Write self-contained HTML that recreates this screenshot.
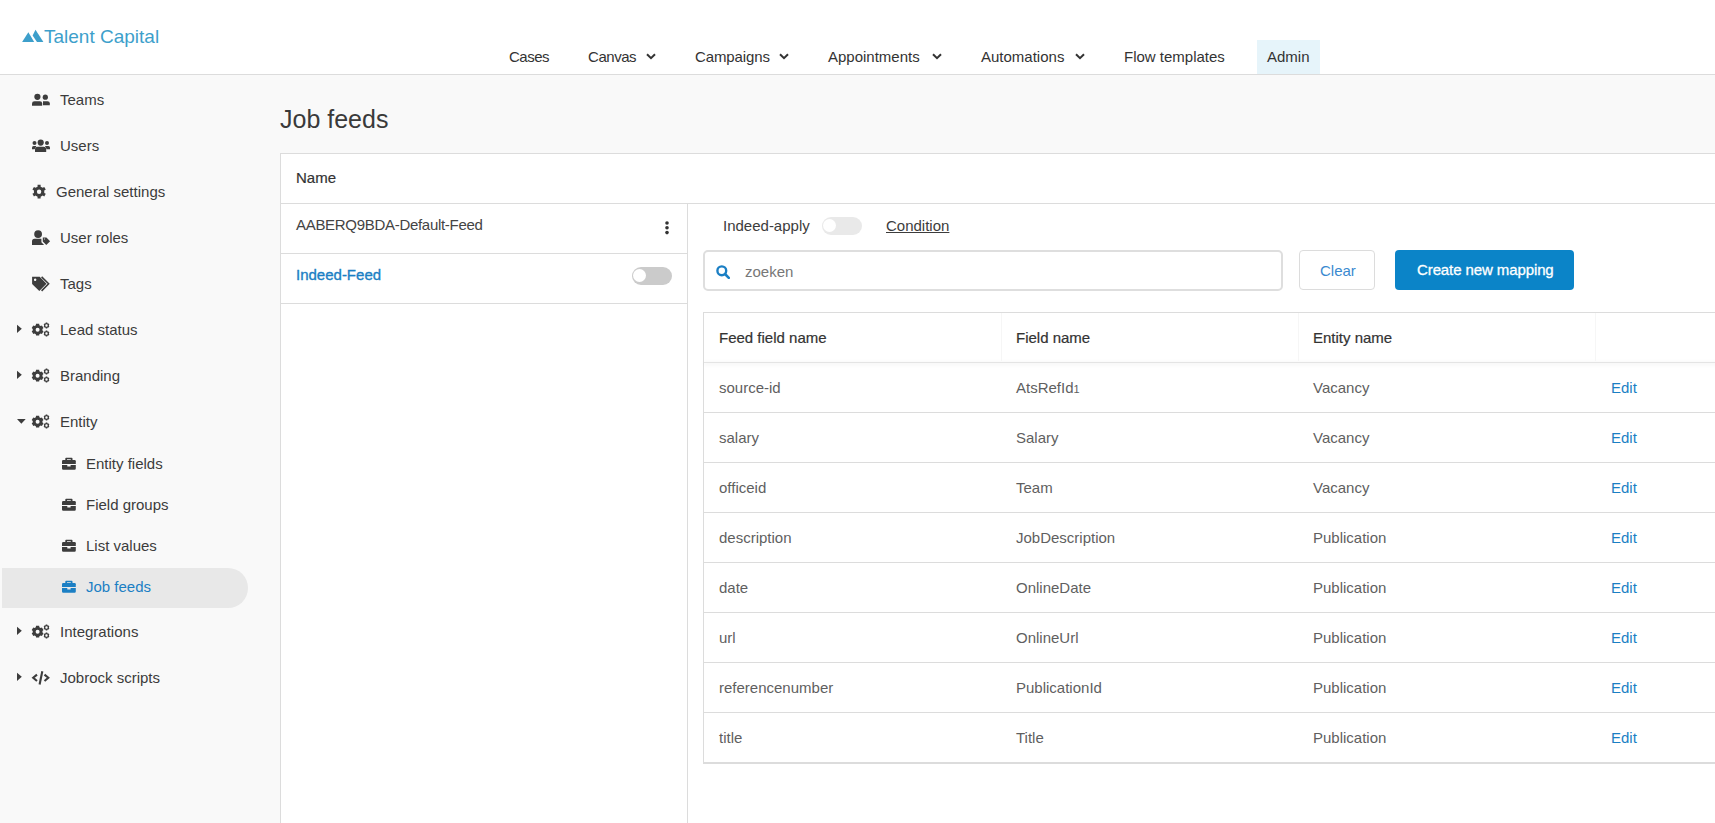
<!DOCTYPE html>
<html><head><meta charset="utf-8">
<style>
*{box-sizing:border-box;margin:0;padding:0}
html,body{width:1715px;height:823px;overflow:hidden}
body{background:#f9f9f9;font-family:"Liberation Sans",sans-serif;color:#3c3c3c;position:relative}
.abs{position:absolute;white-space:nowrap}
#hdr{position:absolute;left:0;top:0;width:1715px;height:75px;background:#fff;border-bottom:1px solid #dcdcdc}
.nav{position:absolute;top:48px;font-size:15px;line-height:18px;color:#333;white-space:nowrap}
.chev{position:absolute;top:53px;width:10px;height:7px}
#admin{position:absolute;left:1257px;top:40px;width:63px;height:34px;background:#e6f4fa}
.side{position:absolute;font-size:15px;line-height:18px;color:#3c3c3c;white-space:nowrap}
.ico{position:absolute}
#card{position:absolute;left:280px;top:153px;width:1500px;height:700px;background:#fff;border:1px solid #dcdcdc}
.t15{font-size:15px;line-height:18px}
</style></head><body>
<div id="hdr">
  <svg class="ico" style="left:22px;top:29px" width="22" height="13" viewBox="0 0 22 13"><path d="M0.1 12.9 L6.35 3.2 L12.2 12.9 Z" fill="#3d9fcb"/><path d="M15 12.9 L10.6 6.4 L13.5 0.8 L21.4 12.9 Z" fill="#3d9fcb"/></svg>
  <div class="abs" style="left:44px;top:26px;font-size:19px;line-height:22px;color:#3d9fcb">Talent Capital</div>
  <div id="admin"></div>
  <div class="nav" style="left:509px;letter-spacing:-0.5px">Cases</div>
  <div class="nav" style="left:588px;letter-spacing:-0.45px">Canvas</div>
  <svg class="chev" style="left:646px" viewBox="0 0 10 7"><path d="M1 1.2 L5 5.2 L9 1.2" stroke="#333" stroke-width="2" fill="none"/></svg>
  <div class="nav" style="left:695px;letter-spacing:-0.1px">Campaigns</div>
  <svg class="chev" style="left:779px" viewBox="0 0 10 7"><path d="M1 1.2 L5 5.2 L9 1.2" stroke="#333" stroke-width="2" fill="none"/></svg>
  <div class="nav" style="left:828px">Appointments</div>
  <svg class="chev" style="left:932px" viewBox="0 0 10 7"><path d="M1 1.2 L5 5.2 L9 1.2" stroke="#333" stroke-width="2" fill="none"/></svg>
  <div class="nav" style="left:981px">Automations</div>
  <svg class="chev" style="left:1075px" viewBox="0 0 10 7"><path d="M1 1.2 L5 5.2 L9 1.2" stroke="#333" stroke-width="2" fill="none"/></svg>
  <div class="nav" style="left:1124px">Flow templates</div>
  <div class="nav" style="left:1267px">Admin</div>
</div>

<!-- sidebar -->
<div id="sidebar">
  <div class="abs" style="left:2px;top:568px;width:246px;height:40px;background:#e8e8e8;border-radius:0 20px 20px 0"></div>
  <div class="side" style="left:60px;top:91px">Teams</div>
  <div class="side" style="left:60px;top:137px">Users</div>
  <div class="side" style="left:56px;top:183px">General settings</div>
  <div class="side" style="left:60px;top:229px">User roles</div>
  <div class="side" style="left:60px;top:275px">Tags</div>
  <div class="side" style="left:60px;top:321px">Lead status</div>
  <div class="side" style="left:60px;top:367px">Branding</div>
  <div class="side" style="left:60px;top:413px">Entity</div>
  <div class="side" style="left:86px;top:455px">Entity fields</div>
  <div class="side" style="left:86px;top:496px">Field groups</div>
  <div class="side" style="left:86px;top:537px">List values</div>
  <div class="side" style="left:86px;top:578px;color:#1b7fc4">Job feeds</div>
  <div class="side" style="left:60px;top:623px">Integrations</div>
  <div class="side" style="left:60px;top:669px">Jobrock scripts</div>
<!--SIDEICONS--><svg class="ico" style="left:0;top:0" width="280" height="823" viewBox="0 0 280 823"><circle cx="37.4" cy="96.8" r="3.1" fill="#3d3d3d"/><path d="M32 105.8 L32 103.5 Q32 101.2 34.5 101.2 L39.8 101.2 Q42.2 101.2 42.2 103.5 L42.2 105.8 Z" fill="#3d3d3d"/><circle cx="45.3" cy="97.2" r="2.6" fill="#3d3d3d"/><path d="M43 105.2 L43 101.2 L47.5 101.2 Q49.8 101.2 49.8 103.3 L49.8 105.2 Z" fill="#3d3d3d"/><circle cx="40.7" cy="142.6" r="3.1" fill="#3d3d3d"/><path d="M35 152 L35 149.3 Q35 146.8 37.6 146.8 L43.6 146.8 Q46.2 146.8 46.2 149.3 L46.2 152 Z" fill="#3d3d3d"/><circle cx="34.5" cy="143.1" r="2.0" fill="#3d3d3d"/><path d="M32 149.2 L32 147.6 Q32 146 33.6 146 L36.4 146 L34.6 149.2 Z" fill="#3d3d3d"/><circle cx="47" cy="143.1" r="2.0" fill="#3d3d3d"/><path d="M50 149.2 L50 147.6 Q50 146 48.4 146 L45 146 L46.6 149.2 Z" fill="#3d3d3d"/><path fill-rule="evenodd" d="M37.57 186.63 L37.57 184.87 L40.63 184.87 L40.63 186.63 L42.73 187.84 L44.25 186.96 L45.78 189.61 L44.26 190.49 L44.26 192.91 L45.78 193.79 L44.25 196.44 L42.73 195.56 L40.63 196.77 L40.63 198.53 L37.57 198.53 L37.57 196.77 L35.47 195.56 L33.95 196.44 L32.42 193.79 L33.94 192.91 L33.94 190.49 L32.42 189.61 L33.95 186.96 L35.47 187.84Z M41.30 191.70 A2.2 2.2 0 1 0 36.90 191.70 A2.2 2.2 0 1 0 41.30 191.70Z" fill="#3d3d3d"/><circle cx="38.1" cy="234.1" r="3.9" fill="#3d3d3d"/><path d="M32 245 L32 241.2 Q32 238.7 34.5 238.7 L41.4 238.7 L41.4 242.2 L44.1 245 Z" fill="#3d3d3d"/><path fill-rule="evenodd" d="M42.8 237.6 L46.4 237.6 L50.1 241.3 L46.3 245 L42.8 241.6 Z M44.2 238.6 L45 238.6 L45 239.4 L44.2 239.4 Z" fill="#3d3d3d"/><path fill-rule="evenodd" d="M32.1 276.8 L39.7 276.8 L46.5 283.8 L39.3 291 L32.1 284 Z M35.1 278.6 A1.1 1.1 0 1 0 35.11 278.6 Z" fill="#3d3d3d"/><circle cx="35.2" cy="279.8" r="1.15" fill="#f9f9f9"/><path d="M41.6 276.9 L48.6 283.8 L41.6 290.9" stroke="#3d3d3d" stroke-width="1.6" fill="none"/><path fill-rule="evenodd" d="M35.84 325.13 L36.02 323.81 L39.18 323.81 L39.36 325.13 L40.68 325.89 L41.91 325.39 L43.49 328.12 L42.44 328.93 L42.44 330.47 L43.49 331.28 L41.91 334.01 L40.68 333.51 L39.36 334.27 L39.18 335.59 L36.02 335.59 L35.84 334.27 L34.52 333.51 L33.29 334.01 L31.71 331.28 L32.76 330.47 L32.76 328.93 L31.71 328.12 L33.29 325.39 L34.52 325.89Z M39.60 329.70 A2.0 2.0 0 1 0 35.60 329.70 A2.0 2.0 0 1 0 39.60 329.70Z" fill="#3d3d3d"/><path fill-rule="evenodd" d="M45.65 323.15 L45.72 322.60 L47.28 322.60 L47.35 323.15 L48.11 323.59 L48.62 323.38 L49.40 324.72 L48.96 325.06 L48.96 325.94 L49.40 326.28 L48.62 327.62 L48.11 327.41 L47.35 327.85 L47.28 328.40 L45.72 328.40 L45.65 327.85 L44.89 327.41 L44.38 327.62 L43.60 326.28 L44.04 325.94 L44.04 325.06 L43.60 324.72 L44.38 323.38 L44.89 323.59Z M47.70 325.50 A1.2 1.2 0 1 0 45.30 325.50 A1.2 1.2 0 1 0 47.70 325.50Z" fill="#3d3d3d"/><path fill-rule="evenodd" d="M45.65 331.15 L45.72 330.60 L47.28 330.60 L47.35 331.15 L48.11 331.59 L48.62 331.38 L49.40 332.72 L48.96 333.06 L48.96 333.94 L49.40 334.28 L48.62 335.62 L48.11 335.41 L47.35 335.85 L47.28 336.40 L45.72 336.40 L45.65 335.85 L44.89 335.41 L44.38 335.62 L43.60 334.28 L44.04 333.94 L44.04 333.06 L43.60 332.72 L44.38 331.38 L44.89 331.59Z M47.70 333.50 A1.2 1.2 0 1 0 45.30 333.50 A1.2 1.2 0 1 0 47.70 333.50Z" fill="#3d3d3d"/><path fill-rule="evenodd" d="M35.84 371.13 L36.02 369.81 L39.18 369.81 L39.36 371.13 L40.68 371.89 L41.91 371.39 L43.49 374.12 L42.44 374.93 L42.44 376.47 L43.49 377.28 L41.91 380.01 L40.68 379.51 L39.36 380.27 L39.18 381.59 L36.02 381.59 L35.84 380.27 L34.52 379.51 L33.29 380.01 L31.71 377.28 L32.76 376.47 L32.76 374.93 L31.71 374.12 L33.29 371.39 L34.52 371.89Z M39.60 375.70 A2.0 2.0 0 1 0 35.60 375.70 A2.0 2.0 0 1 0 39.60 375.70Z" fill="#3d3d3d"/><path fill-rule="evenodd" d="M45.65 369.15 L45.72 368.60 L47.28 368.60 L47.35 369.15 L48.11 369.59 L48.62 369.38 L49.40 370.72 L48.96 371.06 L48.96 371.94 L49.40 372.28 L48.62 373.62 L48.11 373.41 L47.35 373.85 L47.28 374.40 L45.72 374.40 L45.65 373.85 L44.89 373.41 L44.38 373.62 L43.60 372.28 L44.04 371.94 L44.04 371.06 L43.60 370.72 L44.38 369.38 L44.89 369.59Z M47.70 371.50 A1.2 1.2 0 1 0 45.30 371.50 A1.2 1.2 0 1 0 47.70 371.50Z" fill="#3d3d3d"/><path fill-rule="evenodd" d="M45.65 377.15 L45.72 376.60 L47.28 376.60 L47.35 377.15 L48.11 377.59 L48.62 377.38 L49.40 378.72 L48.96 379.06 L48.96 379.94 L49.40 380.28 L48.62 381.62 L48.11 381.41 L47.35 381.85 L47.28 382.40 L45.72 382.40 L45.65 381.85 L44.89 381.41 L44.38 381.62 L43.60 380.28 L44.04 379.94 L44.04 379.06 L43.60 378.72 L44.38 377.38 L44.89 377.59Z M47.70 379.50 A1.2 1.2 0 1 0 45.30 379.50 A1.2 1.2 0 1 0 47.70 379.50Z" fill="#3d3d3d"/><path fill-rule="evenodd" d="M35.84 417.13 L36.02 415.81 L39.18 415.81 L39.36 417.13 L40.68 417.89 L41.91 417.39 L43.49 420.12 L42.44 420.93 L42.44 422.47 L43.49 423.28 L41.91 426.01 L40.68 425.51 L39.36 426.27 L39.18 427.59 L36.02 427.59 L35.84 426.27 L34.52 425.51 L33.29 426.01 L31.71 423.28 L32.76 422.47 L32.76 420.93 L31.71 420.12 L33.29 417.39 L34.52 417.89Z M39.60 421.70 A2.0 2.0 0 1 0 35.60 421.70 A2.0 2.0 0 1 0 39.60 421.70Z" fill="#3d3d3d"/><path fill-rule="evenodd" d="M45.65 415.15 L45.72 414.60 L47.28 414.60 L47.35 415.15 L48.11 415.59 L48.62 415.38 L49.40 416.72 L48.96 417.06 L48.96 417.94 L49.40 418.28 L48.62 419.62 L48.11 419.41 L47.35 419.85 L47.28 420.40 L45.72 420.40 L45.65 419.85 L44.89 419.41 L44.38 419.62 L43.60 418.28 L44.04 417.94 L44.04 417.06 L43.60 416.72 L44.38 415.38 L44.89 415.59Z M47.70 417.50 A1.2 1.2 0 1 0 45.30 417.50 A1.2 1.2 0 1 0 47.70 417.50Z" fill="#3d3d3d"/><path fill-rule="evenodd" d="M45.65 423.15 L45.72 422.60 L47.28 422.60 L47.35 423.15 L48.11 423.59 L48.62 423.38 L49.40 424.72 L48.96 425.06 L48.96 425.94 L49.40 426.28 L48.62 427.62 L48.11 427.41 L47.35 427.85 L47.28 428.40 L45.72 428.40 L45.65 427.85 L44.89 427.41 L44.38 427.62 L43.60 426.28 L44.04 425.94 L44.04 425.06 L43.60 424.72 L44.38 423.38 L44.89 423.59Z M47.70 425.50 A1.2 1.2 0 1 0 45.30 425.50 A1.2 1.2 0 1 0 47.70 425.50Z" fill="#3d3d3d"/><path fill-rule="evenodd" d="M35.84 627.13 L36.02 625.81 L39.18 625.81 L39.36 627.13 L40.68 627.89 L41.91 627.39 L43.49 630.12 L42.44 630.93 L42.44 632.47 L43.49 633.28 L41.91 636.01 L40.68 635.51 L39.36 636.27 L39.18 637.59 L36.02 637.59 L35.84 636.27 L34.52 635.51 L33.29 636.01 L31.71 633.28 L32.76 632.47 L32.76 630.93 L31.71 630.12 L33.29 627.39 L34.52 627.89Z M39.60 631.70 A2.0 2.0 0 1 0 35.60 631.70 A2.0 2.0 0 1 0 39.60 631.70Z" fill="#3d3d3d"/><path fill-rule="evenodd" d="M45.65 625.15 L45.72 624.60 L47.28 624.60 L47.35 625.15 L48.11 625.59 L48.62 625.38 L49.40 626.72 L48.96 627.06 L48.96 627.94 L49.40 628.28 L48.62 629.62 L48.11 629.41 L47.35 629.85 L47.28 630.40 L45.72 630.40 L45.65 629.85 L44.89 629.41 L44.38 629.62 L43.60 628.28 L44.04 627.94 L44.04 627.06 L43.60 626.72 L44.38 625.38 L44.89 625.59Z M47.70 627.50 A1.2 1.2 0 1 0 45.30 627.50 A1.2 1.2 0 1 0 47.70 627.50Z" fill="#3d3d3d"/><path fill-rule="evenodd" d="M45.65 633.15 L45.72 632.60 L47.28 632.60 L47.35 633.15 L48.11 633.59 L48.62 633.38 L49.40 634.72 L48.96 635.06 L48.96 635.94 L49.40 636.28 L48.62 637.62 L48.11 637.41 L47.35 637.85 L47.28 638.40 L45.72 638.40 L45.65 637.85 L44.89 637.41 L44.38 637.62 L43.60 636.28 L44.04 635.94 L44.04 635.06 L43.60 634.72 L44.38 633.38 L44.89 633.59Z M47.70 635.50 A1.2 1.2 0 1 0 45.30 635.50 A1.2 1.2 0 1 0 47.70 635.50Z" fill="#3d3d3d"/><path d="M17 324.7 L21.8 328.8 L17 332.9 Z" fill="#3d3d3d"/><path d="M17 370.7 L21.8 374.8 L17 378.9 Z" fill="#3d3d3d"/><path d="M17 626.7 L21.8 630.8 L17 634.9 Z" fill="#3d3d3d"/><path d="M17 672.7 L21.8 676.8 L17 680.9 Z" fill="#3d3d3d"/><path d="M17 419 L25.7 419 L21.35 423.8 Z" fill="#3d3d3d"/><path fill-rule="evenodd" d="M65.3 460 L65.3 458.6 Q65.3 457.8 66.1 457.8 L71.7 457.8 Q72.5 457.8 72.5 458.6 L72.5 460 L67 460 L67 459.2 L70.8 459.2 L70.8 460 Z" fill="#3d3d3d"/><path d="M62 461.2 Q62 460 63.2 460 L74.6 460 Q75.8 460 75.8 461.2 L75.8 463.9 L62 463.9 Z" fill="#3d3d3d"/><path d="M62 464.9 L67.3 464.9 L67.3 466.6 L70.6 466.6 L70.6 464.9 L75.8 464.9 L75.8 468.6 Q75.8 469.8 74.6 469.8 L63.2 469.8 Q62 469.8 62 468.6 Z" fill="#3d3d3d"/><path fill-rule="evenodd" d="M65.3 501 L65.3 499.6 Q65.3 498.8 66.1 498.8 L71.7 498.8 Q72.5 498.8 72.5 499.6 L72.5 501 L67 501 L67 500.2 L70.8 500.2 L70.8 501 Z" fill="#3d3d3d"/><path d="M62 502.2 Q62 501 63.2 501 L74.6 501 Q75.8 501 75.8 502.2 L75.8 504.9 L62 504.9 Z" fill="#3d3d3d"/><path d="M62 505.9 L67.3 505.9 L67.3 507.6 L70.6 507.6 L70.6 505.9 L75.8 505.9 L75.8 509.6 Q75.8 510.8 74.6 510.8 L63.2 510.8 Q62 510.8 62 509.6 Z" fill="#3d3d3d"/><path fill-rule="evenodd" d="M65.3 542 L65.3 540.6 Q65.3 539.8 66.1 539.8 L71.7 539.8 Q72.5 539.8 72.5 540.6 L72.5 542 L67 542 L67 541.2 L70.8 541.2 L70.8 542 Z" fill="#3d3d3d"/><path d="M62 543.2 Q62 542 63.2 542 L74.6 542 Q75.8 542 75.8 543.2 L75.8 545.9 L62 545.9 Z" fill="#3d3d3d"/><path d="M62 546.9 L67.3 546.9 L67.3 548.6 L70.6 548.6 L70.6 546.9 L75.8 546.9 L75.8 550.6 Q75.8 551.8 74.6 551.8 L63.2 551.8 Q62 551.8 62 550.6 Z" fill="#3d3d3d"/><path fill-rule="evenodd" d="M65.3 583 L65.3 581.6 Q65.3 580.8 66.1 580.8 L71.7 580.8 Q72.5 580.8 72.5 581.6 L72.5 583 L67 583 L67 582.2 L70.8 582.2 L70.8 583 Z" fill="#1b7fc4"/><path d="M62 584.2 Q62 583 63.2 583 L74.6 583 Q75.8 583 75.8 584.2 L75.8 586.9 L62 586.9 Z" fill="#1b7fc4"/><path d="M62 587.9 L67.3 587.9 L67.3 589.6 L70.6 589.6 L70.6 587.9 L75.8 587.9 L75.8 591.6 Q75.8 592.8 74.6 592.8 L63.2 592.8 Q62 592.8 62 591.6 Z" fill="#1b7fc4"/><path d="M37 674.6 L33.2 677.8 L37 681" stroke="#3d3d3d" stroke-width="2.1" fill="none" stroke-linejoin="miter"/><path d="M44.5 674.6 L48.3 677.8 L44.5 681" stroke="#3d3d3d" stroke-width="2.1" fill="none"/><path d="M42.3 671.2 L39.6 684.5" stroke="#3d3d3d" stroke-width="2.1" fill="none"/></svg><!--/SIDEICONS-->
</div>

<div class="abs" style="left:280px;top:105px;font-size:25px;line-height:28px;color:#3a3a3a">Job feeds</div>

<div id="card"></div>
<div class="abs t15" style="left:296px;top:169px;color:#333;-webkit-text-stroke:0.2px #333">Name</div>
<div class="abs" style="left:281px;top:203px;width:1434px;height:1px;background:#dcdcdc"></div>
<div class="abs" style="left:687px;top:203px;width:1px;height:620px;background:#dcdcdc"></div>
<div class="abs" style="left:281px;top:253px;width:406px;height:1px;background:#dcdcdc"></div>
<div class="abs" style="left:281px;top:303px;width:406px;height:1px;background:#dcdcdc"></div>
<div class="abs t15" style="left:296px;top:216px;color:#444;letter-spacing:-0.3px">AABERQ9BDA-Default-Feed</div>
<svg class="ico" style="left:664px;top:220px" width="6" height="16" viewBox="0 0 6 16"><circle cx="3" cy="3" r="1.8" fill="#333"/><circle cx="3" cy="7.7" r="1.8" fill="#333"/><circle cx="3" cy="12.6" r="1.8" fill="#333"/></svg>
<div class="abs t15" style="left:296px;top:266px;color:#1b7fc4;-webkit-text-stroke:0.35px #1b7fc4">Indeed-Feed</div>
<div class="abs" style="left:632px;top:267px;width:40px;height:18px;border-radius:9px;background:#cbcbcb"></div>
<div class="abs" style="left:633px;top:269px;width:13px;height:13px;border-radius:50%;background:#fff"></div>

<div class="abs t15" style="left:723px;top:217px;color:#3c3c3c">Indeed-apply</div>
<div class="abs" style="left:822px;top:217px;width:40px;height:18px;border-radius:9px;background:#e9e9e9"></div>
<div class="abs" style="left:823px;top:219px;width:13px;height:13px;border-radius:50%;background:#fff"></div>
<div class="abs t15" style="left:886px;top:217px;color:#3c3c3c;text-decoration:underline">Condition</div>

<div class="abs" style="left:703px;top:250px;width:580px;height:41px;border:2px solid #dedede;border-radius:5px;background:#fff"></div>
<svg class="ico" style="left:716px;top:265px" width="14" height="14" viewBox="0 0 14 14"><circle cx="5.8" cy="5.8" r="4.4" stroke="#1b7fc4" stroke-width="2.4" fill="none"/><path d="M9 9 L12.8 12.8" stroke="#1b7fc4" stroke-width="2.6" stroke-linecap="round"/></svg>
<div class="abs t15" style="left:745px;top:263px;color:#777">zoeken</div>
<div class="abs" style="left:1299px;top:250px;width:76px;height:40px;border:1px solid #dcdcdc;border-radius:4px;background:#fff"></div>
<div class="abs t15" style="left:1320px;top:262px;color:#3a8ad0">Clear</div>
<div class="abs" style="left:1395px;top:250px;width:179px;height:40px;border-radius:4px;background:#0b84c8"></div>
<div class="abs t15" style="left:1417px;top:261px;color:#fff;-webkit-text-stroke:0.3px #fff;letter-spacing:-0.1px">Create new mapping</div>
<div class="abs" style="left:703px;top:312px;width:1200px;height:452px;border:1px solid #dcdcdc;border-bottom:2px solid #dcdcdc;background:#fff"></div>
<div class="abs" style="left:704px;top:362px;width:1100px;height:1px;background:#e4e4e4;box-shadow:0 1px 4px rgba(0,0,0,.14)"></div>
<div class="abs" style="left:1001px;top:313px;width:1px;height:48px;background:#f6f6f6"></div>
<div class="abs" style="left:1298px;top:313px;width:1px;height:48px;background:#f6f6f6"></div>
<div class="abs" style="left:1595px;top:313px;width:1px;height:48px;background:#f6f6f6"></div>
<div class="abs t15" style="left:719px;top:329px;color:#333;-webkit-text-stroke:0.2px #333">Feed field name</div>
<div class="abs t15" style="left:1016px;top:329px;color:#333;-webkit-text-stroke:0.2px #333">Field name</div>
<div class="abs t15" style="left:1313px;top:329px;color:#333;-webkit-text-stroke:0.2px #333">Entity name</div>
<div class="abs t15" style="left:719px;top:379px;color:#5f5f5f">source-id</div>
<div class="abs t15" style="left:1016px;top:379px;color:#5f5f5f">AtsRefId<span style="font-size:11px">1</span></div>
<div class="abs t15" style="left:1313px;top:379px;color:#5f5f5f">Vacancy</div>
<div class="abs t15" style="left:1611px;top:379px;color:#1b7fc4">Edit</div>
<div class="abs" style="left:704px;top:412px;width:1100px;height:1px;background:#dcdcdc"></div>
<div class="abs t15" style="left:719px;top:429px;color:#5f5f5f">salary</div>
<div class="abs t15" style="left:1016px;top:429px;color:#5f5f5f">Salary</div>
<div class="abs t15" style="left:1313px;top:429px;color:#5f5f5f">Vacancy</div>
<div class="abs t15" style="left:1611px;top:429px;color:#1b7fc4">Edit</div>
<div class="abs" style="left:704px;top:462px;width:1100px;height:1px;background:#dcdcdc"></div>
<div class="abs t15" style="left:719px;top:479px;color:#5f5f5f">officeid</div>
<div class="abs t15" style="left:1016px;top:479px;color:#5f5f5f">Team</div>
<div class="abs t15" style="left:1313px;top:479px;color:#5f5f5f">Vacancy</div>
<div class="abs t15" style="left:1611px;top:479px;color:#1b7fc4">Edit</div>
<div class="abs" style="left:704px;top:512px;width:1100px;height:1px;background:#dcdcdc"></div>
<div class="abs t15" style="left:719px;top:529px;color:#5f5f5f">description</div>
<div class="abs t15" style="left:1016px;top:529px;color:#5f5f5f">JobDescription</div>
<div class="abs t15" style="left:1313px;top:529px;color:#5f5f5f">Publication</div>
<div class="abs t15" style="left:1611px;top:529px;color:#1b7fc4">Edit</div>
<div class="abs" style="left:704px;top:562px;width:1100px;height:1px;background:#dcdcdc"></div>
<div class="abs t15" style="left:719px;top:579px;color:#5f5f5f">date</div>
<div class="abs t15" style="left:1016px;top:579px;color:#5f5f5f">OnlineDate</div>
<div class="abs t15" style="left:1313px;top:579px;color:#5f5f5f">Publication</div>
<div class="abs t15" style="left:1611px;top:579px;color:#1b7fc4">Edit</div>
<div class="abs" style="left:704px;top:612px;width:1100px;height:1px;background:#dcdcdc"></div>
<div class="abs t15" style="left:719px;top:629px;color:#5f5f5f">url</div>
<div class="abs t15" style="left:1016px;top:629px;color:#5f5f5f">OnlineUrl</div>
<div class="abs t15" style="left:1313px;top:629px;color:#5f5f5f">Publication</div>
<div class="abs t15" style="left:1611px;top:629px;color:#1b7fc4">Edit</div>
<div class="abs" style="left:704px;top:662px;width:1100px;height:1px;background:#dcdcdc"></div>
<div class="abs t15" style="left:719px;top:679px;color:#5f5f5f">referencenumber</div>
<div class="abs t15" style="left:1016px;top:679px;color:#5f5f5f">PublicationId</div>
<div class="abs t15" style="left:1313px;top:679px;color:#5f5f5f">Publication</div>
<div class="abs t15" style="left:1611px;top:679px;color:#1b7fc4">Edit</div>
<div class="abs" style="left:704px;top:712px;width:1100px;height:1px;background:#dcdcdc"></div>
<div class="abs t15" style="left:719px;top:729px;color:#5f5f5f">title</div>
<div class="abs t15" style="left:1016px;top:729px;color:#5f5f5f">Title</div>
<div class="abs t15" style="left:1313px;top:729px;color:#5f5f5f">Publication</div>
<div class="abs t15" style="left:1611px;top:729px;color:#1b7fc4">Edit</div>

</body></html>
